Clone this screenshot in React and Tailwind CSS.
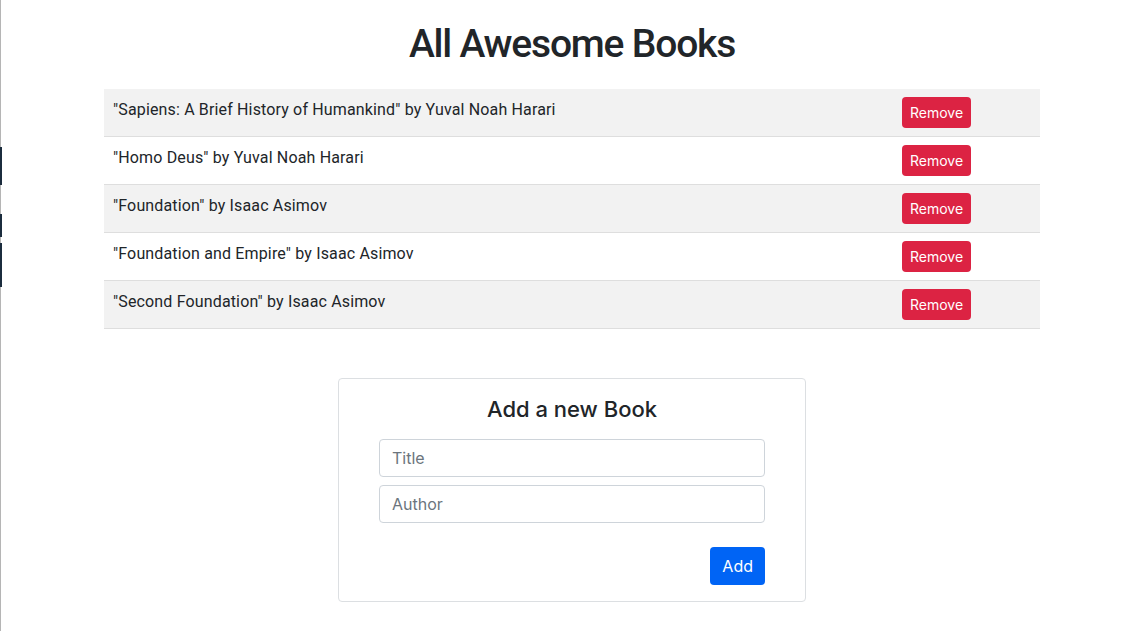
const books = [
  { title: "Sapiens: A Brief History of Humankind", author: "Yuval Noah Harari" },
  { title: "Homo Deus", author: "Yuval Noah Harari" },
  { title: "Foundation", author: "Isaac Asimov" },
  { title: "Foundation and Empire", author: "Isaac Asimov" },
  { title: "Second Foundation", author: "Isaac Asimov" },
];

export default function App() {
  return (
    <div
      className="flex min-h-[631px] bg-white text-[#212529]"
      style={{ fontFamily: "Inter, 'Noto Sans', sans-serif" }}
    >
      {/* window edge on the left */}
      <div className="flex w-[2px] flex-col">
        <div className="h-[147px] w-px bg-[#b5b5b5]" />
        <div className="h-[38px] bg-[#1b2c3d]" />
        <div className="h-[29px] w-px bg-[#b5b5b5]" />
        <div className="h-[23px] bg-[#1b2c3d]" />
        <div className="h-[6px] w-px bg-[#b5b5b5]" />
        <div className="h-[44px] bg-[#1b2c3d]" />
        <div className="flex-1 w-px bg-[#b5b5b5]" />
      </div>

      <main className="flex flex-1 flex-col items-center pl-[3px] pt-[20px]">
        <h1 className="mb-[21px] font-['Roboto',sans-serif] text-[39px] font-medium leading-[48px] tracking-[-1.2px]">
          All Awesome Books
        </h1>

        <ul className="w-[936px] border-b border-[#dedede]">
          {books.map((book, i) => (
            <li
              key={book.title}
              className={`flex items-start border-t border-[#dedede] py-2 first:border-t-0 ${
                i % 2 === 0 ? "bg-[#f2f2f2]" : "bg-white"
              }`}
            >
              <p className="flex-1 px-[9px] pt-px font-['Roboto',sans-serif] text-[16px] leading-[24px] tracking-[0.15px]">
                "{book.title}" by {book.author}
              </p>
              <div className="w-[146px] px-2">
                <button className="h-[31px] rounded-[4px] bg-[#dc2343] px-2 text-[14px] text-white">
                  Remove
                </button>
              </div>
            </li>
          ))}
        </ul>

        <form className="mt-[49px] flex w-[468px] flex-col rounded-[4px] border border-[#dcdfe2] px-10 pb-4 pt-[14px]">
          <h2 className="mb-[14px] text-center text-[22px] font-medium leading-[32px]">
            Add a new Book
          </h2>
          <input
            placeholder="Title"
            className="h-[38px] rounded-[4px] border border-[#ced4da] px-3 text-[16px] placeholder:text-[#6c757d] outline-none"
          />
          <input
            placeholder="Author"
            className="mt-[8px] h-[38px] rounded-[4px] border border-[#ced4da] px-3 text-[16px] placeholder:text-[#6c757d] outline-none"
          />
          <div className="mt-[24px] flex justify-end">
            <button
              type="button"
              className="h-[38px] rounded-[4px] bg-[#0064f5] px-3 text-[16px] text-white"
            >
              Add
            </button>
          </div>
        </form>
      </main>
    </div>
  );
}
